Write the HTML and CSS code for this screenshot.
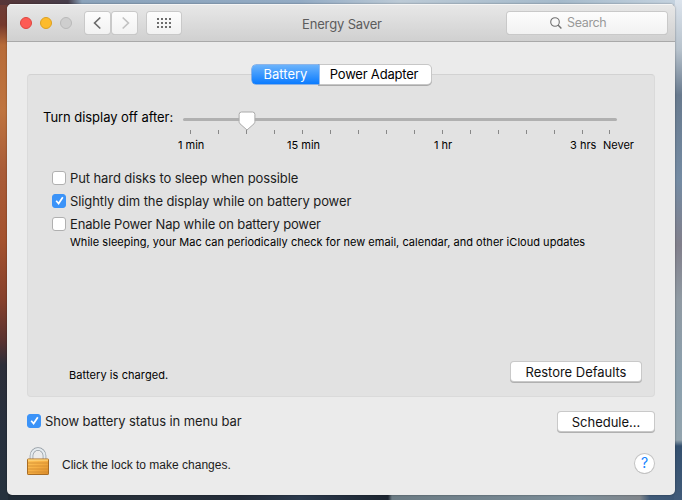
FILE: index.html
```html
<!DOCTYPE html>
<html lang="en">
<head>
<meta charset="utf-8">
<title>Energy Saver</title>
<link rel="stylesheet" href="styles.css">
</head>
<body>
<div class="window">
  <header class="titlebar">
    <div class="lights"><i class="light red"></i><i class="light amber"></i><i class="light off"></i></div>
    <div class="nav">
      <button class="tool"><svg width="24" height="22" viewBox="0 0 24 22"><path d="M14.3 5.500 L8.600 11 L14.3 16.500" fill="none" stroke="#6c6c6c" stroke-width="1.700"/></svg></button>
      <button class="tool"><svg width="24" height="22" viewBox="0 0 24 22"><path d="M9.700 5.500 L15.4 11 L9.700 16.500" fill="none" stroke="#c2c2c2" stroke-width="1.700"/></svg></button>
    </div>
    <button class="tool all"><svg width="14" height="10" viewBox="0 0 14 10"><path d="M0 1H14M0 5H14M0 9H14" stroke="#6c6c6c" stroke-width="2" stroke-dasharray="2 2"/></svg></button>
    <h1 class="title"><span>Energy Saver</span></h1>
    <div class="search">
      <svg width="12" height="12" viewBox="0 0 12 12"><circle cx="5" cy="5" r="4.3" fill="none" stroke="#707070" stroke-width="1.1"/><path d="M8 8L11.4 11.4" stroke="#707070" stroke-width="1.4"/></svg>
      <span>Search</span>
    </div>
  </header>
  <main class="content">
    <section class="panel">
      <div class="tabs"><button class="tab selected"><span>Battery</span></button><button class="tab"><span>Power Adapter</span></button></div>
      <div class="sleep">
        <span class="sleep-label">Turn display off after:</span>
        <div class="slider">
          <div class="track"><svg class="thumb" width="18" height="20" viewBox="0 0 18 20"><path d="M3.5 1H14.5Q16.9 1 16.9 3.5V10.5Q16.9 11.8 16 12.8L9 19L2 12.8Q1.1 11.8 1.1 10.5V3.5Q1.1 1 3.5 1Z" fill="#fff" stroke="#aaa" stroke-width="1"/></svg></div>
          <div class="ticks"><i></i><i></i><i></i><i></i><i></i><i></i><i></i><i></i><i></i><i></i><i></i><i></i><i></i><i></i><i></i><i></i></div>
          <div class="marks"><span class="m1">1 min</span><span class="m2">15 min</span><span class="m3">1 hr</span><span class="m4">3 hrs</span><span class="m5">Never</span></div>
        </div>
      </div>
      <div class="options">
        <label class="check"><i class="box"></i><span class="t1">Put hard disks to sleep when possible</span></label>
        <label class="check"><i class="box on"><svg width="13" height="13" viewBox="0 0 13 13"><path d="M3.200 6.800L5.600 9.500L9.800 3.200" fill="none" stroke="#fff" stroke-width="1.700"/></svg></i><span class="t2">Slightly dim the display while on battery power</span></label>
        <label class="check"><i class="box"></i><span class="t3">Enable Power Nap while on battery power</span></label>
        <p class="hint"><span>While sleeping, your Mac can periodically check for new email, calendar, and other iCloud updates</span></p>
      </div>
      <div class="panel-foot"><span class="status">Battery is charged.</span><button class="push restore"><span>Restore Defaults</span></button></div>
    </section>
    <div class="menu-row">
      <label class="check"><i class="box on"><svg width="13" height="13" viewBox="0 0 13 13"><path d="M3.200 6.800L5.600 9.500L9.800 3.200" fill="none" stroke="#fff" stroke-width="1.700"/></svg></i><span class="t4">Show battery status in menu bar</span></label>
      <button class="push schedule"><span>Schedule...</span></button>
    </div>
    <footer class="lock-row">
      <svg class="lock" width="22" height="29" viewBox="0 0 22 29">
        <defs><linearGradient id="brass" x1="0" x2="1" y1="0" y2="1"><stop offset="0" stop-color="#ffc65a"/><stop offset=".5" stop-color="#f5ae43"/><stop offset="1" stop-color="#dd8c28"/></linearGradient></defs>
        <path d="M4.500 13V8.500a6.500 6.500 0 0 1 13 0V13" fill="none" stroke="#8d969e" stroke-width="3.600"/>
        <path d="M4.500 13V8.500a6.500 6.500 0 0 1 13 0V13" fill="none" stroke="#e4eaee" stroke-width="2.200"/>
        <rect x=".5" y="12" width="21" height="15.500" rx=".6" fill="url(#brass)" stroke="#a86c24"/>
        <path d="M1 13H21" stroke="#ffe08d"/>
        <path d="M1 16H21M1 19H21M1 22H21M1 25H21" stroke="#d18b30" stroke-width=".8"/>
      </svg>
      <span class="lock-text">Click the lock to make changes.</span>
      <button class="help">?</button>
    </footer>
  </main>
</div>
</body>
</html>
```
FILE: styles.css
```css
* { box-sizing: border-box; }
body {
  margin: 0; width: 682px; height: 500px; overflow: hidden; padding: 4px 7px 5px;
  font: 13px/16px Inter, "Liberation Sans", sans-serif; color: #1c1c1c;
  background:
    linear-gradient(90deg, #583638, #463d4a 68px, #8ba3bb 82px, #93abc4 300px, #bccad6 400px, #a5bacb 560px, #c4d2df) 0 0 / 675px 5px no-repeat,
    linear-gradient(#6b3d38, #75392d 25px, #b76b38 45px, #bf743f 110px, #a95c38 170px, #a4512d 240px, #86402c 300px, #5a3230 340px, #2c2e39 365px, #27303e 430px, #26323e) 0 0 / 8px 500px no-repeat,
    linear-gradient(#dce4ed, #b7c2cc 50px, #687a8e 95px, #748ba3 180px, #817f8b 245px, #909aa3 300px, #8ba0ae 380px, #93a4ae 440px, #34506f 446px, #415b79) 674px 0 / 8px 500px no-repeat,
    linear-gradient(90deg, #202b36, #27303a 140px, #232c39 240px, #2b3a4d 300px, #1c2530 388px, #6b7b84 392px, #7b8d98 580px, #80868c 640px, #3f5a78 650px, #3c5674);
}
button { font: inherit; color: inherit; border: 0; padding: 0; display: flex; align-items: center; justify-content: center; }
span { white-space: nowrap; }
i { display: block; }
.window { width: 668px; height: 491px; border-radius: 5px; background: #ebebeb; overflow: hidden; box-shadow: 0 0 2px rgba(0,0,0,.45); }
.titlebar { height: 38px; display: flex; align-items: center; padding: 0 8px 0 13px; background: linear-gradient(#e8e8e8, #d0d0d0); border-bottom: 1px solid #a9a9a9; box-shadow: inset 0 1px #f5f5f5; }
.lights { display: flex; gap: 8px; width: 65px; }
.light { width: 12px; height: 12px; border-radius: 50%; border: 1px solid; }
.red { background: #fd5b54; border-color: #df453e; }
.amber { background: #fdbb2c; border-color: #dda01f; }
.off { background: #cecece; border-color: #b9b9b9; }
.nav { display: flex; gap: 2px; margin-right: 10px; }
.tool, .search { height: 22px; border-radius: 3px; background: linear-gradient(#fdfdfd, #f2f2f2); box-shadow: 0 0 0 1px #c9c9c9, 0 1px 0 0 #b3b3b3; }
.tool { width: 25px; }
.all { width: 34px; }
.title { flex: 1; margin: 0; font-size: 13px; font-weight: 400; letter-spacing: -.15px; color: #5c5c5c; padding: 3px 0 0 121px; }
.search { width: 160px; display: flex; align-items: center; padding-left: 43px; gap: 5px; color: #999; }
.search span { font-size: 12.5px; letter-spacing: -.35px; }
.content { padding: 32px 20px 0; }
.panel { height: 323px; border: 1px solid #dadada; border-top-color: #d2d2d2; border-radius: 4px; background: #e2e2e2; }
.tabs { display: flex; width: 179px; height: 20px; margin: -10px 0 0 224px; }
.tab { width: 112px; height: 19px; letter-spacing: -.2px; background: #fff; color: #000; border-radius: 0 4px 4px 0; box-shadow: 0 0 0 1px #c7c7c7, 0 1px 0 1px #aaa; }
.tab span { margin: -1px 2px 0 0; }
.tab.selected { position: relative; width: 67px; letter-spacing: 0; color: #fff; border-radius: 4px 0 0 4px; background: linear-gradient(#6bb3fb, #0a7bff); box-shadow: 0 0 0 .5px #2f7fe5; }
.tab.selected span { margin-right: 0; }
.sleep { display: flex; padding: 24px 0 0 15px; height: 72px; color: #000; }
.sleep-label { width: 140px; letter-spacing: -.05px; }
.slider { width: 434px; padding-top: 9px; }
.track { position: relative; height: 3px; border-radius: 2px; background: #b0b0b0; }
.thumb { position: absolute; left: 54.5px; top: -7px; }
.ticks { display: grid; grid-template-columns: repeat(15, 28px) 1px; padding: 9px 0 0 7px; }
.ticks i { width: 1px; height: 4px; background: #888; }
.ticks i:last-child { margin-left: -1px; }
.marks { display: flex; margin-top: 3px; font-size: 11px; line-height: 16px; }
.marks span { flex: none; }
.options { padding-left: 25px; height: 147px; padding-top: 9px; }
.check { display: flex; align-items: center; gap: 5px; height: 23px; }
.box { width: 14px; height: 14px; flex: none; border-radius: 3px; background: #fff; border: 1px solid #b0b0b0; }
.box.on { background: #3b93f8; border-color: #3b93f8; }
.box svg { display: block; margin: -.5px; }
.options .check { margin-left: -1px; }
.options .check span { margin-left: -1px; }
.t1, .t2 { letter-spacing: -.095px; }
.t3 { letter-spacing: -.15px; }
.t4 { letter-spacing: -.07px; }
.hint { margin: 1px 0 0 17px; font-size: 11px; line-height: 13px; letter-spacing: .03px; color: #000; }
.panel-foot { display: flex; justify-content: space-between; align-items: flex-start; padding: 0 13px 0 41px; margin-top: 58px; }
.status { font-size: 11px; letter-spacing: .08px; margin-top: 5px; color: #000; }
.push { height: 19px; border-radius: 3px; background: #fff; box-shadow: 0 0 0 1px #c9c9c9, 0 1px 0 1px #b0b0b0; color: #111; }
.restore { width: 130px; letter-spacing: -.03px; }
.schedule { width: 96px; margin-right: 1px; }
.menu-row { display: flex; justify-content: space-between; align-items: center; height: 23px; margin-top: 13px; }
.menu-row .check { height: 21px; gap: 4px; margin-top: -2px; }
.lock-row { display: flex; align-items: center; margin-top: 13px; height: 30px; }
.lock { flex: none; }
.lock-text { font: 12px/16px "Liberation Sans", sans-serif; margin-left: 13px; flex: 1; padding-top: 7px; }
.help { width: 19px; height: 19px; margin: 4px 1px 0 0; border-radius: 50%; background: #fff; box-shadow: 0 0 0 1px #c4c4c4, 0 1px 0 0 #b5b5b5; color: #1583ff; font-size: 14px; }
.m1 { margin-left: -5px; width: 109px; }
.m2 { width: 147px; }
.m3 { width: 136px; }
.m4 { width: 33px; }
```
